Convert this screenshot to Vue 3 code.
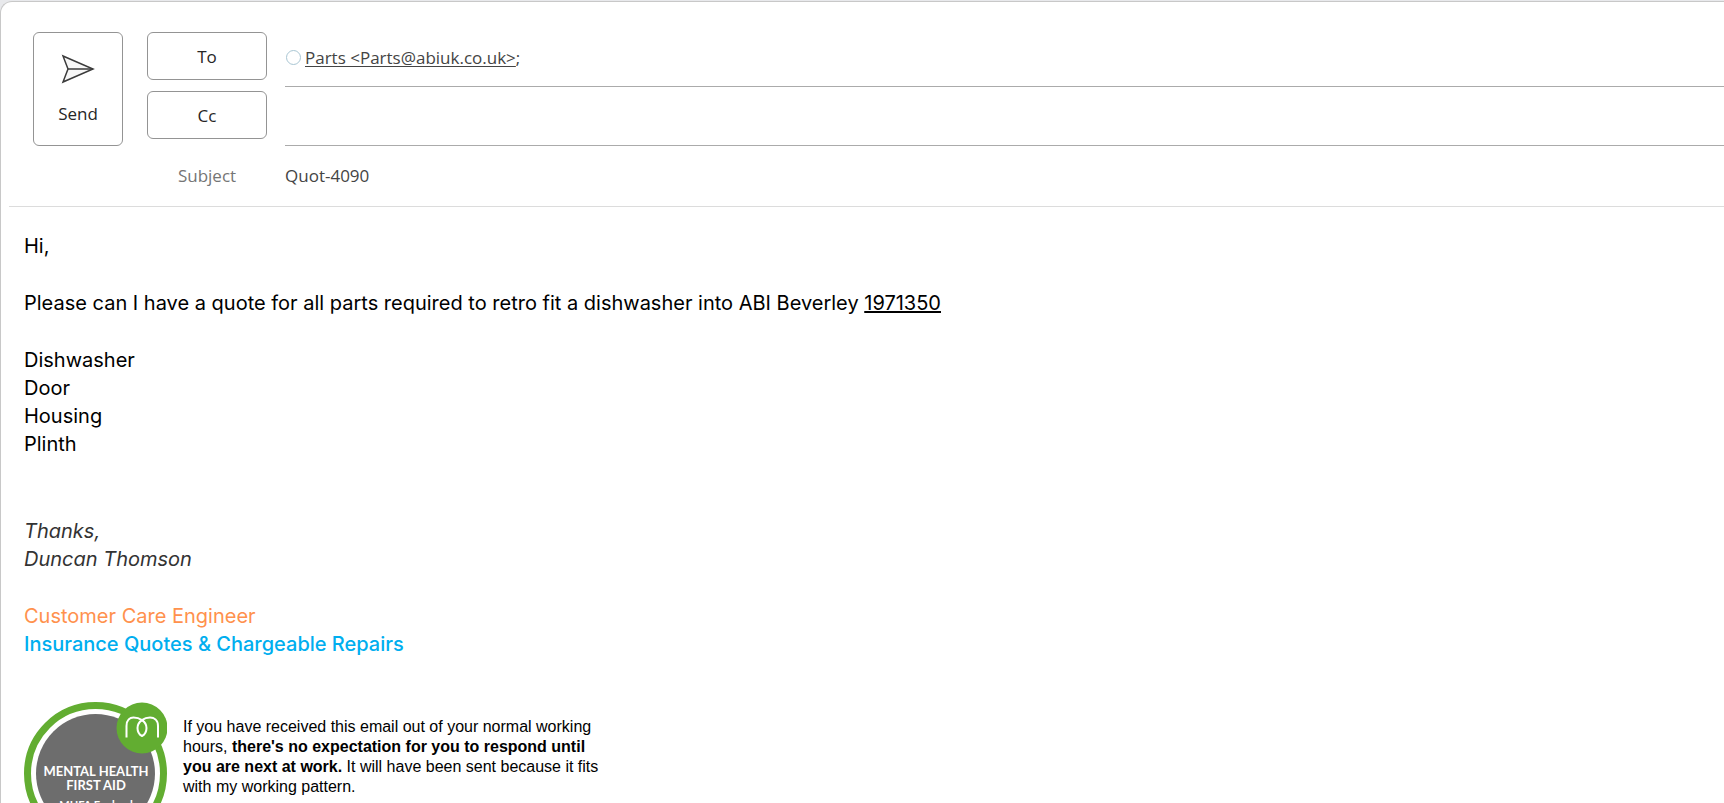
<template>
  <div class="compose-window">
    <form class="compose-card" @submit.prevent>
      <!-- Header -->
      <header class="compose-header">
        <button class="outline-btn send-btn" type="submit">
          <svg class="send-icon" viewBox="0 0 34 30" aria-hidden="true">
            <path d="M2 2 L32 15 L2 28 L7 15 Z" />
            <path d="M7 15 H31" />
          </svg>
          <span>Send</span>
        </button>

        <div class="fields">
          <div class="field-row">
            <button class="outline-btn field-btn" type="button">To</button>
            <div class="field-value recipients">
              <span class="presence"></span>
              <span class="recipient">
                <a :href="`mailto:${recipient.email}`">{{ recipient.name }} &lt;{{ recipient.email }}&gt;</a>;
              </span>
            </div>
          </div>
          <div class="field-row">
            <button id="cc-button" class="outline-btn field-btn" type="button">Cc</button>
            <input v-model="cc" class="field-value" type="text" aria-labelledby="cc-button" />
          </div>
          <div class="field-row subject-row">
            <label class="subject-label" for="subject">Subject</label>
            <input id="subject" v-model="subject" class="subject-input" type="text" />
          </div>
        </div>
      </header>

      <!-- Message -->
      <main class="message">
        <p>Hi,</p>
        <p>
          Please can I have a quote for all parts required to retro fit a dishwasher into ABI Beverley
          <u>1971350</u>
        </p>
        <ul class="parts-list">
          <li v-for="part in parts" :key="part">{{ part }}</li>
        </ul>

        <p class="sign-off">Thanks,<br />Duncan Thomson</p>
        <p class="job">
          <span class="job-title">Customer Care Engineer</span>
          <strong class="job-team">Insurance Quotes &amp; Chargeable Repairs</strong>
        </p>

        <div class="signature">
          <svg class="badge" viewBox="0 0 143 143" role="img" aria-label="Mental Health First Aid">
            <circle class="badge-ring" cx="71.5" cy="71.5" r="68" />
            <circle class="badge-core" cx="71.5" cy="71.5" r="59.5" />
            <circle class="badge-dot" cx="118" cy="26" r="25.5" />
            <path
              class="badge-mark"
              d="M102.5 35.5V24C102.5 18 106 15.5 109.5 15.5C115 15.5 122.5 19 122.5 26C122.5 30 120 33 118 34C116 33 113.5 30 113.5 26C113.5 19 121 15.5 126 15.5C130 15.5 134 18 134 24V35.5"
            />
            <text class="badge-title" x="72" y="74">MENTAL HEALTH</text>
            <text class="badge-title" x="72" y="88">FIRST AID</text>
            <text class="badge-sub" x="72" y="107">MHFA England</text>
          </svg>
          <p class="notice">
            If you have received this email out of your normal working hours,
            <b>there's no expectation for you to respond until you are next at work.</b>
            It will have been sent because it fits with my working pattern.
          </p>
        </div>
      </main>
    </form>
  </div>
</template>

<script setup>
import { ref } from 'vue';

const recipient = { name: 'Parts', email: 'Parts@abiuk.co.uk' };
const cc = ref('');
const subject = ref('Quot-4090');
const parts = ['Dishwasher', 'Door', 'Housing', 'Plinth'];
</script>

<style>
body {
  margin: 0;
  background: #e8e9ec;
}
</style>

<style scoped>
.compose-window {
  box-sizing: border-box;
  height: 100vh;
  padding-top: 1px;
  overflow: hidden;
}

.compose-card {
  box-sizing: border-box;
  min-height: 100%;
  border: 1px solid #c8c8c8;
  border-width: 1px 0 0 1px;
  border-top-left-radius: 12px;
  background: #fff;
}

.compose-header {
  display: flex;
  align-items: flex-start;
  gap: 24px;
  margin-left: 8px;
  padding: 30px 0 0 24px;
  border-bottom: 1px solid #dcdcdc;
  font-family: 'Open Sans', 'Noto Sans', sans-serif;
  font-size: 17px;
  color: #444;
}

.outline-btn {
  box-sizing: border-box;
  padding: 0;
  border: 1px solid #949494;
  border-radius: 6px;
  background: #fff;
  color: #262626;
  font: inherit;
}

.send-btn {
  display: flex;
  flex-direction: column;
  align-items: center;
  justify-content: center;
  gap: 18px;
  width: 90px;
  height: 114px;
}

.send-icon {
  width: 34px;
  height: 30px;
  fill: #f7f7f7;
  stroke: #3b3b3b;
  stroke-width: 1.5;
}

.fields {
  flex: 1;
}

.field-row {
  display: flex;
  align-items: flex-start;
  gap: 18px;
  height: 59px;
}

.field-btn {
  width: 120px;
  height: 48px;
}

.field-value {
  box-sizing: border-box;
  flex: 1;
  height: 55px;
  padding: 0;
  border: 0;
  border-bottom: 1px solid #ababab;
  background: none;
  color: inherit;
  font: inherit;
  outline: none;
}

.recipients {
  display: flex;
  align-items: center;
  gap: 4px;
  padding-bottom: 4px;
}

.presence {
  box-sizing: border-box;
  width: 15px;
  height: 15px;
  margin-left: 1px;
  border: 1px solid #a9c6d3;
  border-radius: 50%;
}

.recipient a {
  color: inherit;
  text-underline-offset: 2px;
}

.subject-row {
  align-items: center;
  height: 50px;
  padding-bottom: 6px;
}

.subject-label {
  width: 120px;
  text-align: center;
  color: #757575;
}

.subject-input {
  flex: 1;
  padding: 0;
  border: 0;
  background: none;
  color: inherit;
  font: inherit;
  outline: none;
}

.message {
  padding: 25px 23px 0;
  font-family: Inter, sans-serif;
  font-size: 20px;
  line-height: 28px;
  color: #000;
}

.message p {
  margin: 0 0 29px;
}

.parts-list {
  margin: 0 0 59px;
  padding: 0;
  list-style: none;
}

.sign-off {
  font-style: italic;
  color: #333;
}

.job {
  display: flex;
  flex-direction: column;
}

.job-title {
  color: #ff914d;
}

.job-team {
  font-weight: 500;
  color: #00aeef;
}

.signature {
  display: flex;
  align-items: flex-start;
  gap: 16px;
  margin-top: 44px;
}

.badge {
  flex: none;
  width: 143px;
  height: 143px;
}

.badge-ring {
  fill: #fff;
  stroke: #62ad31;
  stroke-width: 7;
}

.badge-core {
  fill: #6d6d6d;
}

.badge-dot {
  fill: #62ad31;
}

.badge-mark {
  fill: none;
  stroke: #fff;
  stroke-width: 2;
}

.badge-title,
.badge-sub {
  fill: #fff;
  font-family: Lato, sans-serif;
  font-size: 13px;
  font-weight: 700;
  text-anchor: middle;
}

.badge-sub {
  font-size: 11px;
}

.message .notice {
  max-width: 432px;
  margin: 15px 0 0;
  font-family: 'Liberation Sans', Arial, sans-serif;
  font-size: 16px;
  line-height: 20px;
}
</style>
